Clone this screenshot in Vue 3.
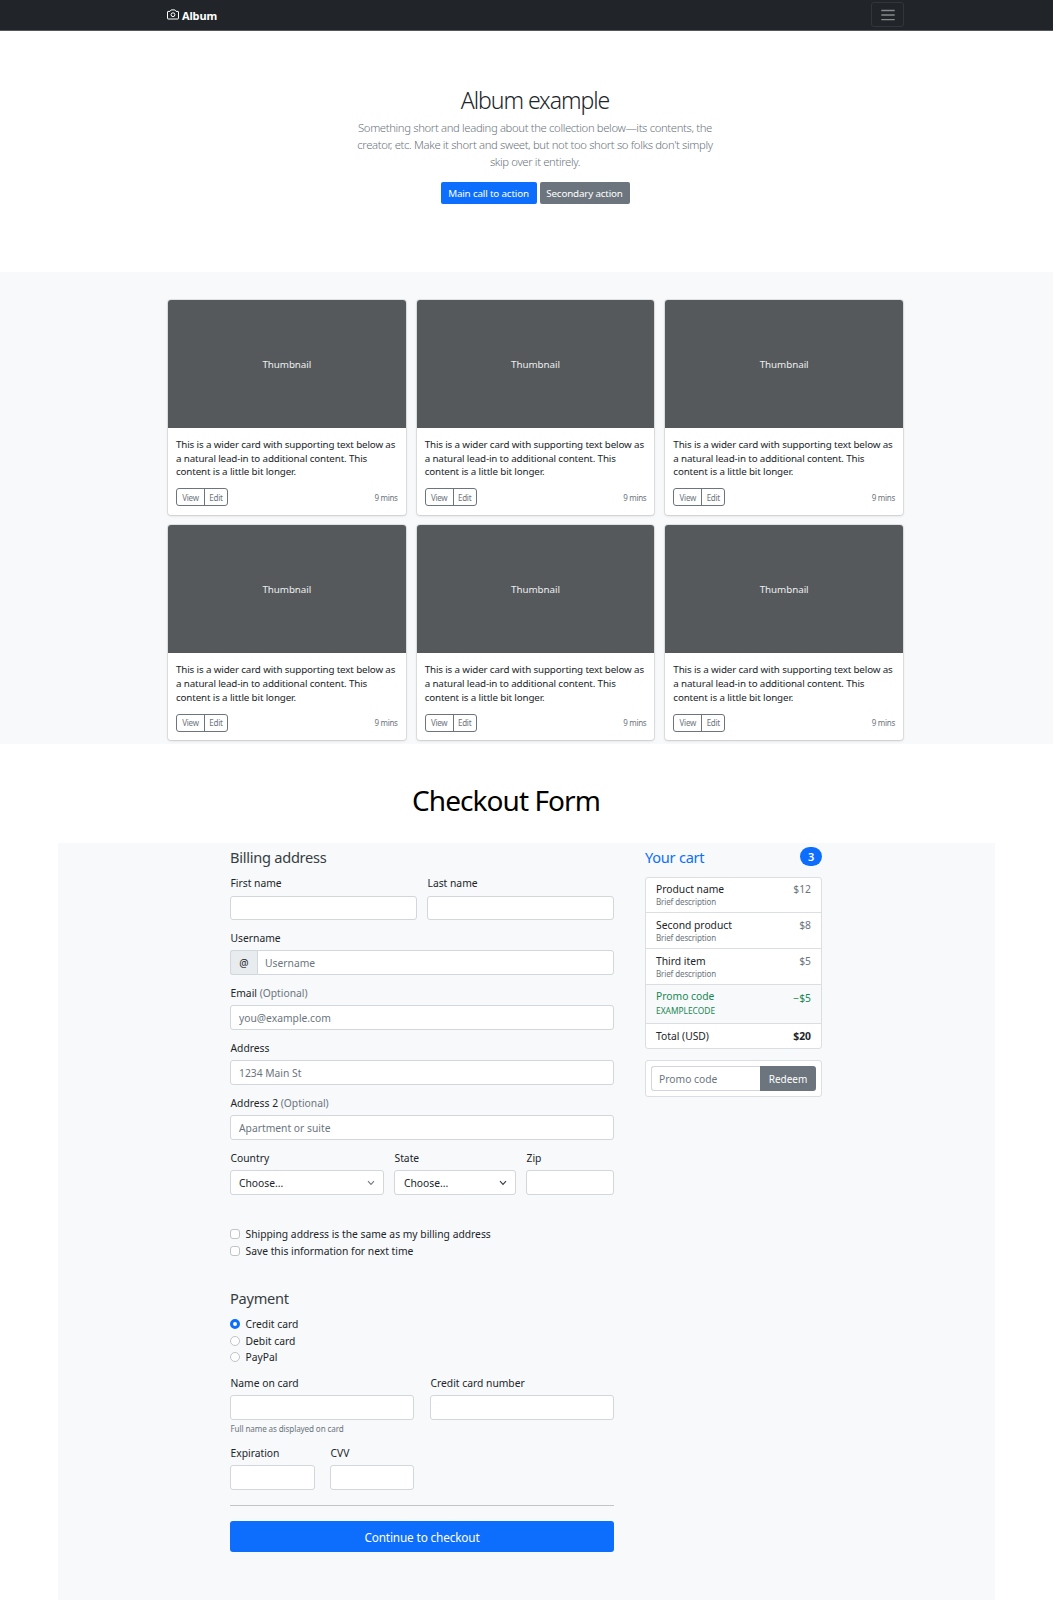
<script setup>
const cards = Array.from({ length: 6 }, (_, i) => i)
const products = [
  { name: 'Product name', price: '$12' },
  { name: 'Second product', price: '$8' },
  { name: 'Third item', price: '$5' },
]
const methods = ['Credit card', 'Debit card', 'PayPal']
</script>

<template>
  <div class="page">
    <header class="navbar">
      <div class="container bar">
        <div class="brand">
          <svg class="camera" viewBox="0 0 12 11" fill="none" stroke="currentColor">
            <path d="M1 2.4h2L4.2.9h3.6L9 2.4h2c.4 0 .5.2.5.5v6.5c0 .4-.2.6-.5.6H1c-.4 0-.5-.2-.5-.6V2.9c0-.3.2-.5.5-.5Z" />
            <circle cx="6" cy="5.7" r="1.9" />
          </svg>
          <strong>Album</strong>
        </div>
        <button class="toggler" aria-label="Toggle navigation">
          <svg viewBox="0 0 14 12" stroke="currentColor" stroke-width="1.4"><path d="M.3 1.5h13.4M.3 6h13.4M.3 10.6h13.4" /></svg>
        </button>
      </div>
    </header>

    <section class="hero">
      <h1>Album example</h1>
      <p>
        Something short and leading about the collection below—its contents, the<br />
        creator, etc. Make it short and sweet, but not too short so folks don't simply<br />
        skip over it entirely.
      </p>
      <div class="actions">
        <button class="main-action">Main call to action</button>
        <button class="second-action">Secondary action</button>
      </div>
    </section>

    <section class="album">
      <div class="cards">
        <article v-for="c in cards" :key="c" class="card">
          <div class="thumb">Thumbnail</div>
          <div class="body">
            <p>This is a wider card with supporting text below as<br />a natural lead-in to additional content. This<br />content is a little bit longer.</p>
            <div class="foot">
              <div class="group"><button>View</button><button>Edit</button></div>
              <small>9 mins</small>
            </div>
          </div>
        </article>
      </div>
    </section>

    <h2 class="form-title">Checkout Form</h2>

    <section class="panel">
      <form class="billing" @submit.prevent>
        <h4>Billing address</h4>
        <div class="row names">
          <div class="field"><label>First name</label><input type="text" /></div>
          <div class="field"><label>Last name</label><input type="text" /></div>
        </div>
        <div class="field">
          <label>Username</label>
          <div class="joined"><span class="at">@</span><input type="text" placeholder="Username" /></div>
        </div>
        <div class="field"><label>Email <i>(Optional)</i></label><input type="text" placeholder="you@example.com" /></div>
        <div class="field"><label>Address</label><input type="text" placeholder="1234 Main St" /></div>
        <div class="field"><label>Address 2 <i>(Optional)</i></label><input type="text" placeholder="Apartment or suite" /></div>
        <div class="row region">
          <div class="field">
            <label>Country</label>
            <div class="select light">Choose...<svg viewBox="0 0 8 6"><path d="M1 1.2 4 4.4 7 1.2" /></svg></div>
          </div>
          <div class="field">
            <label>State</label>
            <div class="select">Choose...<svg viewBox="0 0 8 6"><path d="M1 1.2 4 4.4 7 1.2" /></svg></div>
          </div>
          <div class="field"><label>Zip</label><input type="text" /></div>
        </div>

        <div class="checks">
          <label><span class="box"></span>Shipping address is the same as my billing address</label>
          <label><span class="box"></span>Save this information for next time</label>
        </div>

        <h4 class="pay-title">Payment</h4>
        <div class="radios">
          <label v-for="(m, i) in methods" :key="m"><span class="dot" :class="{ on: i === 0 }"></span>{{ m }}</label>
        </div>
        <div class="row payment">
          <div class="field"><label>Name on card</label><input type="text" /><small>Full name as displayed on card</small></div>
          <div class="field"><label>Credit card number</label><input type="text" /></div>
        </div>
        <div class="row security">
          <div class="field"><label>Expiration</label><input type="text" /></div>
          <div class="field"><label>CVV</label><input type="text" /></div>
        </div>
        <hr />
        <button class="submit">Continue to checkout</button>
      </form>

      <aside class="cart">
        <h4>Your cart <span class="badge">3</span></h4>
        <ul>
          <li v-for="p in products" :key="p.name" class="item">
            <div><b>{{ p.name }}</b><small>Brief description</small></div>
            <span>{{ p.price }}</span>
          </li>
          <li class="item promo">
            <div><b>Promo code</b><small>EXAMPLECODE</small></div>
            <span>−$5</span>
          </li>
          <li class="item total"><b>Total (USD)</b><strong>$20</strong></li>
        </ul>
        <div class="redeem">
          <input type="text" placeholder="Promo code" /><button>Redeem</button>
        </div>
      </aside>
    </section>
  </div>
</template>

<style>
body { background: #fff; }
</style>

<style scoped>
* { box-sizing: border-box; margin: 0; padding: 0; }
.page { width: 1053px; height: 1600px; overflow: hidden; font-family: "Noto Sans", "Open Sans", sans-serif; font-size: 10.3px; color: #212529; }
button, input { font: inherit; border: 0; }
.container { width: 737px; margin: 0 auto 0 167px; }

.navbar { height: 31px; background: #212529; border-bottom: 1px solid #55595c; }
.bar { display: flex; justify-content: space-between; height: 30px; color: #fff; }
.brand { display: flex; gap: 3px; padding-top: 9px; }
.brand strong { font-size: 11px; line-height: 13px; letter-spacing: -.15px; }
.camera { width: 12px; height: 11px; }
.toggler { display: flex; align-items: center; justify-content: center; width: 33px; height: 25px; margin-top: 2px; background: none; border: 1px solid #32363a; border-radius: 3px; color: #87898b; }
.toggler svg { width: 14px; height: 12px; }

.hero { height: 241px; padding: 53px 0 0 17px; display: flex; flex-direction: column; align-items: center; }
.hero h1 { font-weight: 300; font-size: 23px; letter-spacing: -1.05px; line-height: 32px; }
.hero p { margin-top: 3px; font-weight: 300; font-size: 11.3px; letter-spacing: -.36px; line-height: 17px; text-align: center; color: #6c757d; white-space: nowrap; }
.actions { display: flex; gap: 3px; margin-top: 12px; }
.actions button { height: 22px; border-radius: 2px; color: #fff; font-size: 9.8px; letter-spacing: -.15px; white-space: nowrap; }
.main-action { width: 96px; background: #0d6efd; }
.second-action { width: 90px; background: #6c757d; }

.album { height: 472px; background: #f7f9fb; padding-top: 28px; }
.cards { display: grid; width: 735px; margin-left: 168px; grid-template-columns: repeat(3, 1fr); column-gap: 11px; row-gap: 10.4px; }
.card { height: 215px; background: #fff; border-radius: 3px; box-shadow: 0 0 0 1px rgba(0, 0, 0, .08), 0 1px 3px rgba(0, 0, 0, .12); }
.thumb { display: flex; align-items: center; justify-content: center; height: 128px; background: #55595c; border-radius: 3px 3px 0 0; color: #eceeef; font-size: 9.8px; letter-spacing: -.05px; }
.body { padding: 10px 8px 0; }
.body p { font-size: 9.8px; line-height: 13.7px; letter-spacing: -.14px; white-space: nowrap; }
.foot { display: flex; justify-content: space-between; align-items: center; margin-top: 9px; color: #6c757d; font-size: 8px; letter-spacing: -.3px; }
.foot small { font-size: 8px; }
.group { display: flex; height: 18px; border: 1px solid #6c757d; border-radius: 3px; }
.group button { width: 22px; background: none; color: #6c757d; letter-spacing: -.25px; }
.group button:first-child { width: 28px; border-right: 1px solid #6c757d; }

.form-title { height: 99px; padding: 36px 0 0 412px; font-size: 28px; font-weight: 400; line-height: 40px; letter-spacing: -.93px; color: #000; }

.panel { display: flex; gap: 31px; width: 937px; height: 757px; margin-left: 58px; padding-left: 172px; background: #f7f9fb; }
h4 { font-size: 14.6px; font-weight: 400; letter-spacing: -.26px; color: #383d42; white-space: nowrap; }
.billing { width: 384px; }
.billing h4 { height: 31px; padding-top: 4px; line-height: 20px; }
.billing .pay-title { height: 32px; }
.row { display: grid; }
.names { grid-template-columns: 187px 187px; gap: 10px; }
.region { grid-template-columns: 153.5px 121.5px 88px; gap: 10.5px; }
.payment { grid-template-columns: 184px 184px; gap: 16px; }
.security { grid-template-columns: 85px 84px; gap: 15px; }
.field { height: 55px; }
.field > label { display: block; height: 21px; padding-left: .5px; line-height: 19px; white-space: nowrap; }
.field > label i { font-style: normal; color: #6c757d; }
input, .select { display: flex; align-items: center; width: 100%; height: 25px; padding: 0 8px; background: #fff; border: 1px solid #d2d7dc; border-radius: 3px; }
.names label { height: 22px; }
.names input { height: 24px; }
input::placeholder { color: #6c757d; opacity: 1; }
.joined { display: flex; }
.joined input { padding-left: 7px; border-radius: 0 3px 3px 0; }
.at { display: flex; align-items: center; justify-content: center; flex: 0 0 27px; height: 25px; background: #e9ecef; border: 1px solid #d2d7dc; border-right: 0; border-radius: 3px 0 0 3px; }
.select { justify-content: space-between; }
.region .field:nth-child(2) .select { padding-left: 9px; }
.select svg { width: 8px; height: 6px; fill: none; stroke: #343a40; stroke-width: 1.1; }
.select.light svg { stroke: #737a80; }
.checks { height: 80px; padding-top: 22px; }
.checks label, .radios label { display: flex; align-items: center; gap: 5.5px; height: 16.4px; white-space: nowrap; }
.box { width: 10px; height: 10px; background: #fff; border: 1px solid #bfc4c8; border-radius: 3px; }
.dot { width: 10px; height: 10px; background: #fff; border: 1px solid #bfc4c8; border-radius: 50%; }
.dot.on { border: 3px solid #0d6efd; }
.radios { height: 58px; }
.payment .field { height: 70px; }
.field small { display: block; padding-left: .5px; font-size: 8.1px; letter-spacing: -.12px; line-height: 18px; color: #6c757d; white-space: nowrap; }
.security .field { height: 61px; }
hr { height: 1px; border: 0; background: #c3c6c9; }
.submit { display: block; width: 100%; height: 31px; margin-top: 15px; background: #0d6efd; color: #fff; border-radius: 3px; font-size: 11.8px; letter-spacing: -.15px; }

.cart { width: 177px; }
.cart h4 { display: flex; justify-content: space-between; height: 34px; padding-top: 4px; line-height: 20px; color: #0d6efd; }
.badge { width: 22px; height: 19px; border-radius: 10px; background: #0d6efd; color: #fff; font-size: 11px; font-weight: 600; line-height: 19px; text-align: center; }
ul { list-style: none; height: 172px; background: #fff; border: 1px solid #dcdfe1; border-radius: 3px; overflow: hidden; }
.item { display: flex; justify-content: space-between; height: 36px; padding: 5px 10px 0; border-bottom: 1px solid #dcdfe1; line-height: 15px; white-space: nowrap; }
.item:first-child { height: 35px; padding-top: 4px; }
.item b { display: block; font-weight: 400; }
.item small { display: block; font-size: 8px; line-height: 10px; letter-spacing: -.12px; color: #6c757d; }
.item > span { color: #6c757d; }
.item.promo { height: 39px; padding-top: 4px; background: #f7f9fb; }
.promo b, .promo small, .promo > span { color: #198754; }
.promo small { font-size: 8.4px; line-height: 13px; letter-spacing: 0; }
.promo > span { padding-top: 2px; }
.item.total { height: 25px; border: 0; }
.redeem { display: flex; height: 37px; margin-top: 11px; padding: 5px; background: #fff; border: 1px solid #dcdfe1; border-radius: 3px; }
.redeem input { flex: 1; min-width: 0; padding-left: 7px; border-radius: 3px 0 0 3px; border-right: 0; }
.redeem button { width: 56px; height: 25px; background: #6c757d; color: #fff; border-radius: 0 3px 3px 0; font-size: 10px; }
</style>
